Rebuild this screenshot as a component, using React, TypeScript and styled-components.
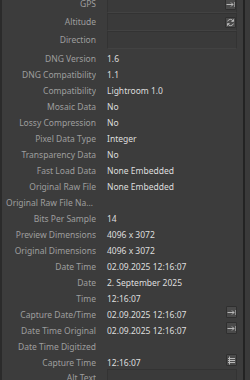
import React from 'react';
import styled, {createGlobalStyle} from "styled-components";

const GlobalStyle = createGlobalStyle`
    html, body {
        margin: 0;
        padding: 0;
        background: #3c3c3c;
        overflow: hidden;
    }
`

type Action = 'goto' | 'refresh' | 'list';

type Item =
    | { kind: 'field', label: string, action?: Action }
    | { kind: 'text', label: string, value?: string, action?: Action };

const items: Item[] = [
    {kind: 'field', label: 'GPS', action: 'goto'},
    {kind: 'field', label: 'Altitude', action: 'refresh'},
    {kind: 'field', label: 'Direction'},
    {kind: 'text', label: 'DNG Version', value: '1.6'},
    {kind: 'text', label: 'DNG Compatibility', value: '1.1'},
    {kind: 'text', label: 'Compatibility', value: 'Lightroom 1.0'},
    {kind: 'text', label: 'Mosaic Data', value: 'No'},
    {kind: 'text', label: 'Lossy Compression', value: 'No'},
    {kind: 'text', label: 'Pixel Data Type', value: 'Integer'},
    {kind: 'text', label: 'Transparency Data', value: 'No'},
    {kind: 'text', label: 'Fast Load Data', value: 'None Embedded'},
    {kind: 'text', label: 'Original Raw File', value: 'None Embedded'},
    {kind: 'text', label: 'Original Raw File Name'},
    {kind: 'text', label: 'Bits Per Sample', value: '14'},
    {kind: 'text', label: 'Preview Dimensions', value: '4096 x 3072'},
    {kind: 'text', label: 'Original Dimensions', value: '4096 x 3072'},
    {kind: 'text', label: 'Date Time', value: '02.09.2025 12:16:07'},
    {kind: 'text', label: 'Date', value: '2. September 2025'},
    {kind: 'text', label: 'Time', value: '12:16:07'},
    {kind: 'text', label: 'Capture Date/Time', value: '02.09.2025 12:16:07', action: 'goto'},
    {kind: 'text', label: 'Date Time Original', value: '02.09.2025 12:16:07', action: 'goto'},
    {kind: 'text', label: 'Date Time Digitized'},
    {kind: 'text', label: 'Capture Time', value: '12:16:07', action: 'list'},
    {kind: 'field', label: 'Alt Text'},
];

const ActionIcon = ({type}: { type: Action }) => {
    if (type === 'refresh') {
        return (
            <svg width="9" height="9" viewBox="0 0 9 9" fill="none" stroke="currentColor" strokeWidth="1">
                <path d="M7.2 3.2A3 3 0 0 0 1.6 3.4"/>
                <path d="M1.8 5.8A3 3 0 0 0 7.4 5.6"/>
                <path d="M7.5 1.3V3.4H5.4"/>
                <path d="M1.5 7.7V5.6H3.6"/>
            </svg>
        );
    }
    if (type === 'list') {
        return (
            <svg width="9" height="9" viewBox="0 0 9 9" fill="none" stroke="currentColor" strokeWidth="1">
                <path d="M2.5 0.5V8.5"/>
                <path d="M1 2.5H8"/>
                <path d="M1 4.5H8"/>
                <path d="M1 6.5H8"/>
            </svg>
        );
    }
    return (
        <svg width="9" height="9" viewBox="0 0 9 9" fill="none" stroke="currentColor" strokeWidth="1">
            <path d="M0.5 4.5H7"/>
            <path d="M5 2.5L7 4.5L5 6.5"/>
            <path d="M8.5 2V7" strokeOpacity="0.6"/>
        </svg>
    );
};

export default function App() {
    return (
        <>
            <GlobalStyle/>
            <Panel>
                <List>
                    {items.map((item) => item.kind === 'field' ? (
                        <FieldRow key={item.label}>
                            <FieldLabel>{item.label}</FieldLabel>
                            <Box>
                                {item.action && <ActionButton><ActionIcon type={item.action}/></ActionButton>}
                            </Box>
                        </FieldRow>
                    ) : (
                        <TextRow key={item.label}>
                            <Label>{item.label}</Label>
                            <ValueCell>
                                <Value>{item.value}</Value>
                                {item.action && <ActionButton><ActionIcon type={item.action}/></ActionButton>}
                            </ValueCell>
                        </TextRow>
                    ))}
                </List>
                <ScrollTrack/>
            </Panel>
        </>
    );
}

const Panel = styled.div`
    width: 250px;
    height: 380px;
    display: flex;
    overflow: hidden;
    background: #3c3c3c;
    border-left: 2px solid #2b2b2b;
    box-sizing: border-box;
    font-family: "Noto Sans", "Open Sans", sans-serif;
    font-size: 8.5px;
`
const List = styled.div`
    flex: 1;
    display: flex;
    flex-direction: column;
    margin-top: -5px;
    padding-right: 6px;
`
const ScrollTrack = styled.div`
    width: 5px;
    flex-shrink: 0;
    border-left: 2px solid #232323;
    background: #3a3a3a;
`
const RowBase = styled.div`
    display: grid;
    grid-template-columns: 94px 1fr;
    column-gap: 11px;
    align-items: start;
`
const FieldRow = styled(RowBase)`
    height: 19px;
`
const TextRow = styled(RowBase)`
    height: 16px;
`
const Label = styled.div`
    padding: 2.5px 0 0 4px;
    line-height: 13.5px;
    text-align: right;
    color: #9e9e9e;
    white-space: nowrap;
    overflow: hidden;
    text-overflow: ellipsis;
`
const FieldLabel = styled(Label)`
    padding-top: 2px;
`
const Box = styled.div`
    height: 18px;
    box-sizing: border-box;
    border: 1px solid #333333;
    border-bottom-color: #424242;
    background: #3a3a3a;
    display: flex;
    justify-content: flex-end;
    align-items: center;
`
const ValueCell = styled.div`
    display: flex;
    justify-content: space-between;
    align-items: flex-start;
    min-width: 0;
`
const Value = styled.span`
    padding-top: 2.5px;
    line-height: 13.5px;
    color: #dedede;
    white-space: nowrap;
`
const ActionButton = styled.div`
    width: 11px;
    height: 12px;
    margin-top: 1px;
    box-sizing: border-box;
    display: flex;
    align-items: center;
    justify-content: center;
    background: #4a4a4a;
    border: 1px solid #2f2f2f;
    border-radius: 1px;
    color: #b8b8b8;
    ${Box} & {
        margin-top: 0;
        height: 11px;
    }
`
